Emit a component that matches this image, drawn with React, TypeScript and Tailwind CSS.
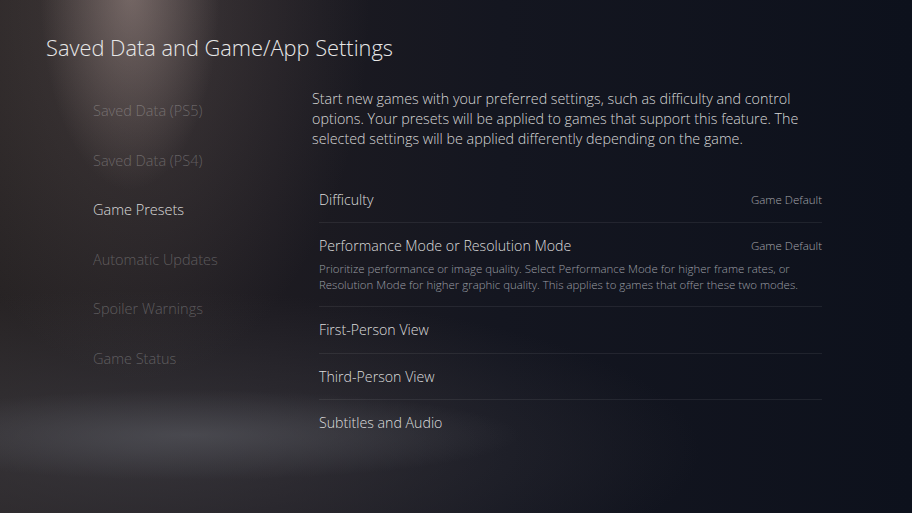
import React from "react";

const sideItems = [
  { label: "Saved Data (PS5)", active: false },
  { label: "Saved Data (PS4)", active: false },
  { label: "Game Presets", active: true },
  { label: "Automatic Updates", active: false },
  { label: "Spoiler Warnings", active: false },
  { label: "Game Status", active: false },
];

interface RowProps {
  label: string;
  value?: string;
  desc?: React.ReactNode;
  last?: boolean;
}

function Row({ label, value, desc, last }: RowProps) {
  return (
    <div className={`${desc ? "py-[13px]" : "py-[12.75px]"} ${last ? "" : "border-b border-white/[0.07]"}`}>
      <div className="flex items-center justify-between h-[20px]">
        <span className="text-[14.2px] text-[#dcdcdc]">{label}</span>
        {value && <span className="text-[11.5px] text-[#a3a5ab]">{value}</span>}
      </div>
      {desc && (
        <div className="mt-[5px] text-[11.45px] leading-[16px] text-[#9c9ea4] whitespace-nowrap">{desc}</div>
      )}
    </div>
  );
}

export default function App() {
  return (
    <div className="w-[912px] h-[513px] overflow-hidden font-['Open_Sans',sans-serif] font-light bg-[radial-gradient(ellipse_90px_200px_at_130px_-10px,rgba(170,150,145,0.5),transparent),radial-gradient(ellipse_230px_380px_at_140px_0px,rgba(120,104,100,0.35),transparent),radial-gradient(ellipse_330px_45px_at_190px_435px,rgba(95,97,104,0.5),transparent),radial-gradient(ellipse_560px_160px_at_140px_450px,rgba(62,60,66,0.7),transparent),linear-gradient(to_right,#272324,#1d1b21_30%,#141620_55%,#0d111c)]">
      {/* Header */}
      <div className="pt-[34px] pl-[46px] h-[62px]">
        <h1 className="text-[21.8px] leading-[28px] font-light text-[#e8e8e8]">
          Saved Data and Game/App Settings
        </h1>
      </div>

      <div className="flex">
        {/* Sidebar */}
        <div className="w-[312px] pl-[93px] pt-[24.5px] flex flex-col">
          {sideItems.map((s) => (
            <div
              key={s.label}
              className={`h-[49.5px] flex items-center text-[14.5px] whitespace-nowrap ${
                s.active ? "text-[#dadada]" : "text-white/25"
              }`}
            >
              {s.label}
            </div>
          ))}
        </div>

        {/* Content */}
        <div className="pt-[27px] w-[510px]">
          <p className="text-[14.3px] leading-[20px] text-[#d6d6d6] whitespace-nowrap">
            Start new games with your preferred settings, such as difficulty and control
            <br />
            options. Your presets will be applied to games that support this feature. The
            <br />
            selected settings will be applied differently depending on the game.
          </p>

          <div className="ml-[7px] w-[503px] mt-[27.5px]">
            <Row label="Difficulty" value="Game Default" />
            <Row
              label="Performance Mode or Resolution Mode"
              value="Game Default"
              desc={
                <>
                  Prioritize performance or image quality. Select Performance Mode for higher frame rates, or
                  <br />
                  Resolution Mode for higher graphic quality. This applies to games that offer these two modes.
                </>
              }
            />
            <Row label="First-Person View" />
            <Row label="Third-Person View" />
            <Row label="Subtitles and Audio" last />
          </div>
        </div>
      </div>
    </div>
  );
}
